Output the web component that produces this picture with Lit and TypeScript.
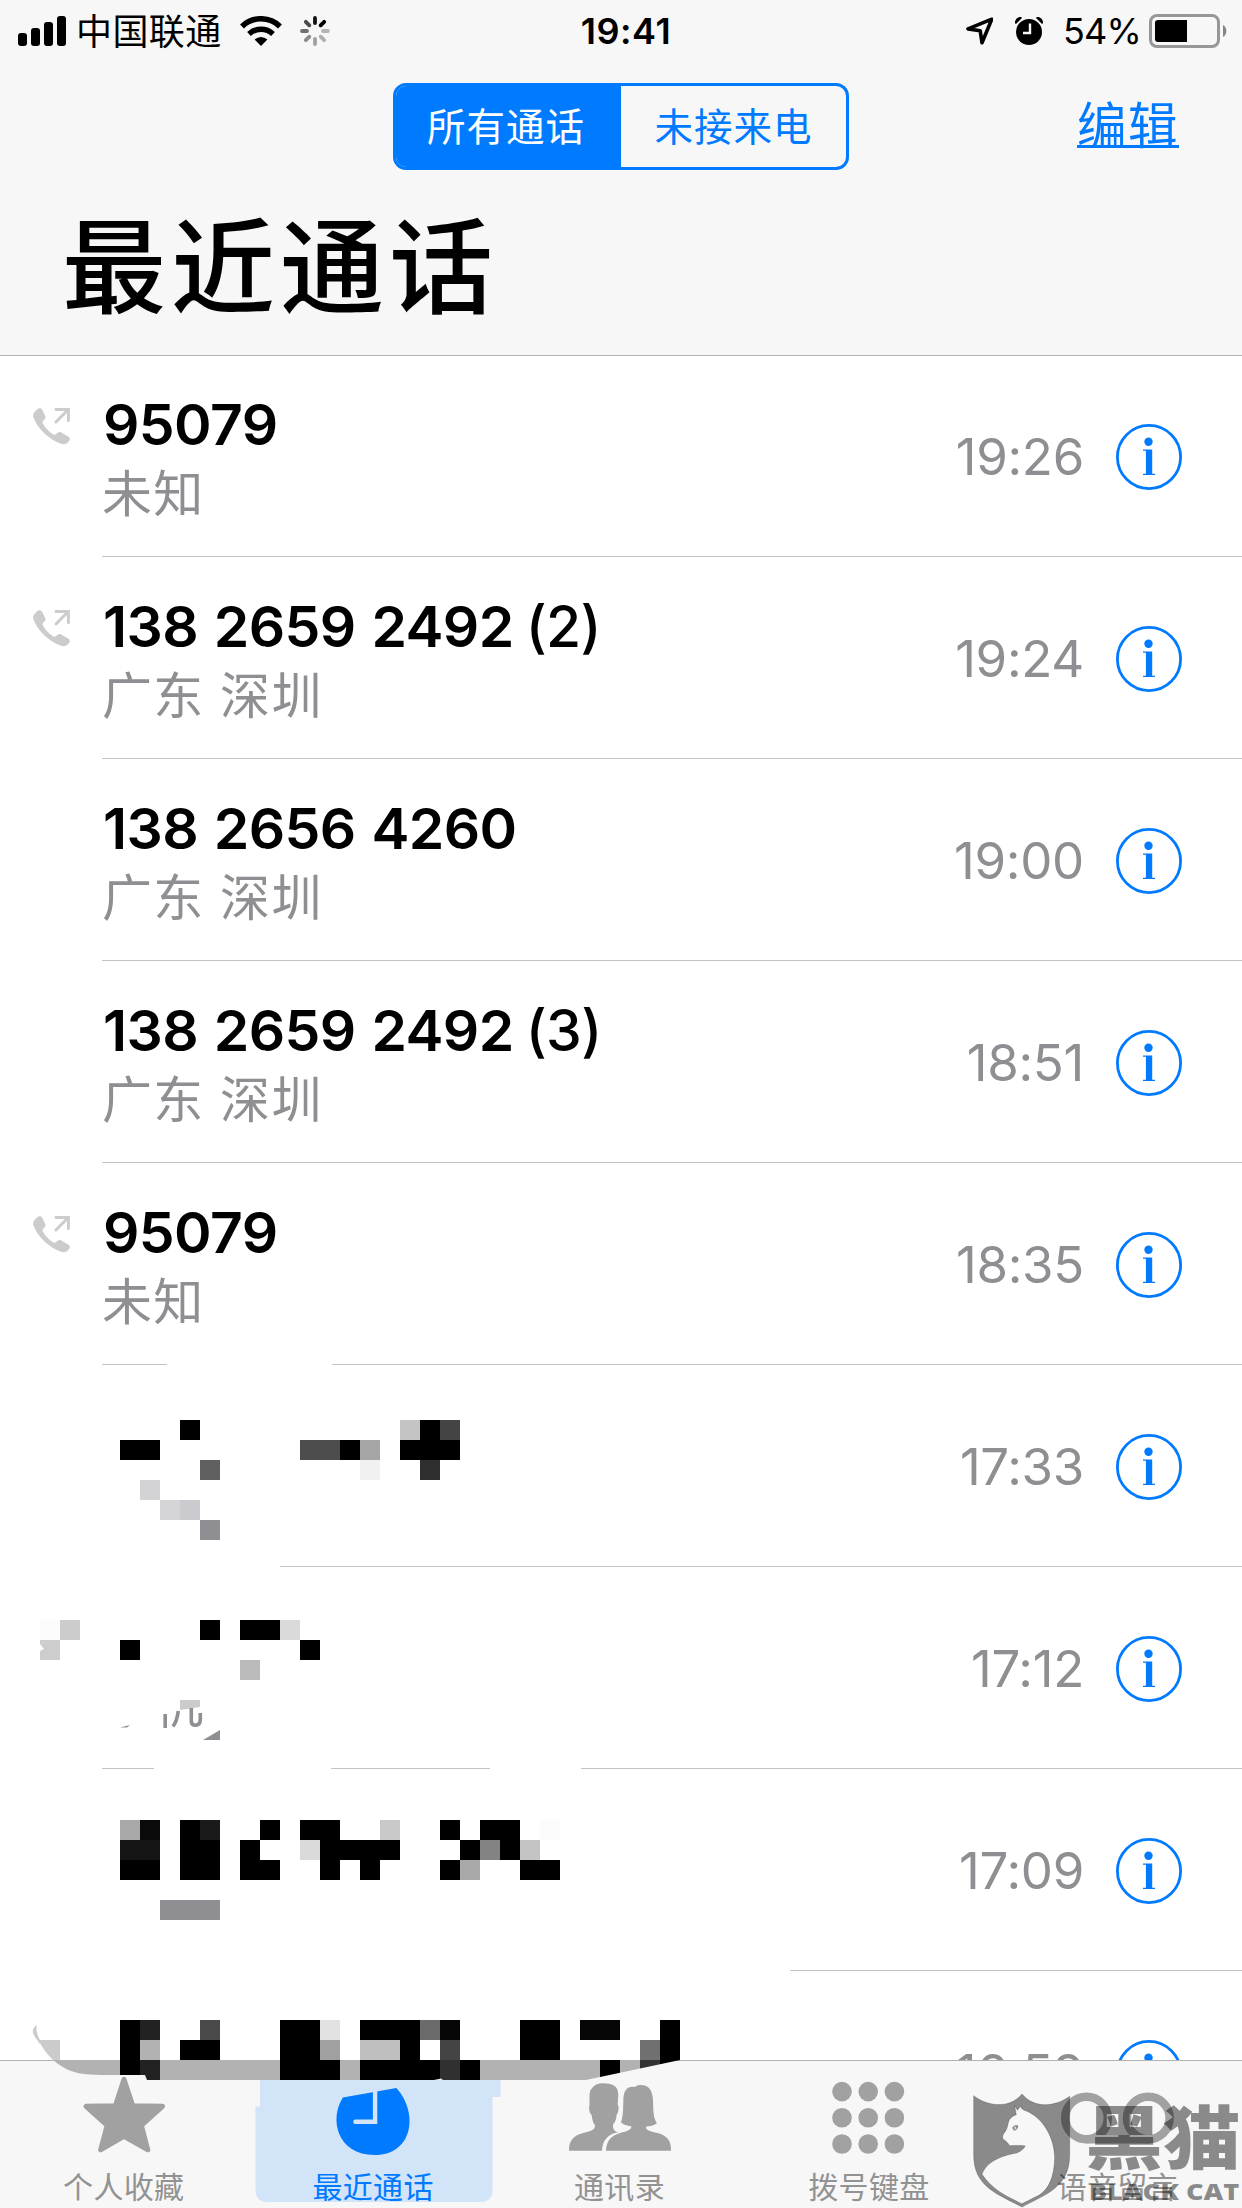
import { LitElement, html, svg, css, nothing } from "lit";
import { customElement, property } from "lit/decorators.js";

type Call = {
  name?: string;
  count?: string;
  place?: string;
  time: string;
  outgoing?: boolean;
  lines: [number, number][];
};

const FULL: [number, number][] = [[102, 1242]];

const CALLS: Call[] = [
  { name: "95079", place: "未知", time: "19:26", outgoing: true, lines: FULL },
  { name: "138 2659 2492", count: "(2)", place: "广东 深圳", time: "19:24", outgoing: true, lines: FULL },
  { name: "138 2656 4260", place: "广东 深圳", time: "19:00", lines: FULL },
  { name: "138 2659 2492", count: "(3)", place: "广东 深圳", time: "18:51", lines: FULL },
  { name: "95079", place: "未知", time: "18:35", outgoing: true, lines: [[102, 167], [332, 1242]] },
  { time: "17:33", lines: [[280, 1242]] },
  { time: "17:12", lines: [[102, 154], [331, 490], [581, 1242]] },
  { time: "17:09", lines: [[790, 1242]] },
  { time: "16:59", lines: [] },
];

// Censor blocks: x, y, width, fill (every block is 20px tall).
const BLOCKS: [number, number, number, string][] = [
  [180, 1420, 20, "#000"], [120, 1440, 40, "#000"], [200, 1460, 20, "#5f5f5f"],
  [140, 1480, 20, "#d3d3d5"], [160, 1500, 20, "#d5d5d7"], [180, 1500, 20, "#cbcbcf"],
  [200, 1520, 20, "#8e8e93"], [300, 1440, 40, "#4d4d4d"], [340, 1440, 20, "#000"],
  [360, 1440, 20, "#a5a5a5"], [360, 1460, 20, "#f1f1f1"], [400, 1420, 20, "#c4c4c4"],
  [420, 1420, 20, "#000"], [440, 1420, 20, "#444"], [400, 1440, 60, "#000"],
  [420, 1460, 20, "#2f2f2f"],

  [40, 1620, 20, "#fcfcfc"], [60, 1620, 20, "#ccc"], [120, 1640, 20, "#000"],
  [200, 1620, 20, "#000"], [240, 1620, 40, "#000"], [280, 1620, 20, "#dadada"],
  [300, 1640, 20, "#000"], [240, 1660, 20, "#bbb"],

  [120, 1820, 20, "#a9a9a9"], [140, 1820, 20, "#0a0a0a"], [180, 1820, 20, "#000"],
  [200, 1820, 20, "#1a1a1a"], [260, 1820, 20, "#000"], [300, 1820, 40, "#000"],
  [380, 1820, 20, "#c8c8c8"], [440, 1820, 20, "#000"], [480, 1820, 40, "#000"],
  [540, 1820, 20, "#fcfcfc"],
  [120, 1840, 40, "#141414"], [180, 1840, 40, "#000"], [240, 1840, 20, "#000"],
  [300, 1840, 20, "#dadada"], [320, 1840, 80, "#000"], [460, 1840, 20, "#000"],
  [480, 1840, 20, "#838383"], [500, 1840, 20, "#000"], [520, 1840, 20, "#c4c4c4"],
  [120, 1860, 40, "#000"], [180, 1860, 40, "#000"], [240, 1860, 40, "#000"],
  [320, 1860, 20, "#000"], [360, 1860, 20, "#000"], [440, 1860, 20, "#000"],
  [460, 1860, 20, "#a9a9a9"], [520, 1860, 40, "#000"],
  [160, 1900, 60, "#8e8e93"],

  [120, 2020, 20, "#000"], [140, 2020, 20, "#222"], [200, 2020, 20, "#4a4a4a"],
  [280, 2020, 40, "#000"], [320, 2020, 20, "#e2e2e2"], [360, 2020, 60, "#000"],
  [420, 2020, 20, "#6b6b6b"], [440, 2020, 20, "#050505"], [520, 2020, 40, "#000"],
  [580, 2020, 40, "#050505"], [660, 2020, 20, "#000"],
  [120, 2040, 20, "#000"], [140, 2040, 20, "#b2b2b2"], [180, 2040, 40, "#000"],
  [280, 2040, 40, "#000"], [320, 2040, 20, "#a0a0a0"], [360, 2040, 40, "#bfbfbf"],
  [400, 2040, 20, "#000"], [420, 2040, 20, "#fff"], [440, 2040, 20, "#444"],
  [520, 2040, 40, "#000"], [640, 2040, 20, "#707070"], [660, 2040, 20, "#000"],
];

const STRIP: [number, number, string][] = [
  [40, 80, "#b2b2b2"], [120, 20, "#000"], [140, 20, "#222"], [160, 120, "#b2b2b2"],
  [280, 60, "#000"], [340, 20, "#b2b2b2"], [360, 80, "#000"], [440, 20, "#303030"],
  [460, 20, "#000"], [480, 120, "#b2b2b2"], [600, 20, "#000"], [620, 20, "#b2b2b2"],
  [640, 20, "#333"], [660, 20, "#000"],
];

@customElement("status-bar")
class StatusBar extends LitElement {
  static styles = css`
    :host { display: block; }
    .bar {
      display: grid; grid-template-columns: 1fr auto 1fr; align-items: center;
      height: 60px; padding: 0 15px 0 18px;
      font-family: Inter, "Noto Sans CJK SC", sans-serif; font-size: 36px; line-height: 60px; color: #000;
    }
    .left, .right { display: flex; align-items: center; }
    .right { justify-content: flex-end; }
    .carrier { font-family: "Noto Sans CJK SC", sans-serif; font-weight: 400; font-size: 36px; line-height: 56px; letter-spacing: 0.4px; margin: 0 0 4px 10px; }
    .time { font-weight: 600; font-size: 36px; letter-spacing: 0.5px; padding-top: 1px; margin-left: 7px; }
    .pct { font-size: 36px; padding-top: 1px; letter-spacing: -0.8px; margin: 0 8px 0 20px; }
    svg { display: block; flex: none; }
    .wifi { margin-left: 18px; }
    .spin { margin-left: 18px; }
    .alarm { margin-left: 21px; }
    .loc { margin-right: 1px; }
  `;
  render() {
    const shades = ["#111", "#000", "#b5b5b5", "#b0b0b0", "#a0a0a0", "#8c8c8c", "#6f6f6f", "#4a4a4a"];
    return html`<div class="bar">
      <div class="left">
        <svg width="48" height="30" viewBox="0 0 48 30">
          <rect x="0" y="17" width="9" height="13" rx="3"/><rect x="13" y="12" width="9" height="18" rx="3"/>
          <rect x="26" y="6" width="9" height="24" rx="3"/><rect x="39" y="0" width="9" height="30" rx="3"/>
        </svg>
        <span class="carrier">中国联通</span>
        <svg class="wifi" width="42" height="30" viewBox="0 0 42 30">
          <path d="M2 10.6A27.5 27.5 0 0 1 40 10.6" fill="none" stroke="#000" stroke-width="5.6" transform="translate(0 -.2)"/>
          <path d="M9 18A17.5 17.5 0 0 1 33 18" fill="none" stroke="#000" stroke-width="5.4"/>
          <path d="M14.6 23.6A9.3 9.3 0 0 1 27.4 23.6L21 30Z"/>
        </svg>
        <svg class="spin" width="30" height="30" viewBox="-15 -15 30 30">
          ${shades.map((c, i) => svg`<path d="M0-8V-13" stroke=${c} stroke-width="3.8" stroke-linecap="round" transform="rotate(${i * 45})"/>`)}
        </svg>
      </div>
      <span class="time">19:41</span>
      <div class="right">
        <svg class="loc" width="28" height="28" viewBox="0 0 28 28">
          <path d="M25.8 2.2 2 11.9 14.2 13.8 16 25.8Z" fill="none" stroke="#000" stroke-width="3.6" stroke-linejoin="round" transform="translate(1 0)"/>
        </svg>
        <svg class="alarm" width="28" height="28" viewBox="0 0 28 28">
          <circle cx="14" cy="15" r="13"/><path d="M0 6.6A6 6 0 0 1 6-.2L7 1 1.2 6.8ZM28 6.6A6 6 0 0 0 22-.2L21 1 26.8 6.8Z"/>
          <path d="M15 6.5V16H8" fill="none" stroke="#f7f7f7" stroke-width="2.4"/>
        </svg>
        <span class="pct">54%</span>
        <svg width="78" height="34" viewBox="0 0 78 34">
          <rect x="1.5" y="1.5" width="68" height="31" rx="6.5" fill="none" stroke="#979797" stroke-width="3"/>
          <path d="M38 6H9Q6 6 6 9V25Q6 28 9 28H38Z"/>
          <path d="M74 11A7 7 0 0 1 74 23Z" fill="#868686"/>
        </svg>
      </div>
    </div>`;
  }
}

@customElement("call-row")
class CallRow extends LitElement {
  @property({ attribute: false }) call!: Call;
  static styles = css`
    :host { display: block; }
    .row { display: grid; grid-template-columns: 103px 1fr auto 66px; height: 201px; padding-right: 60px; }
    .icon { padding: 53px 0 0 33px; }
    .icon svg { display: block; }
    .text { padding-top: 36px; display: flex; flex-direction: column; }
    .name { font: 600 57px/68px Inter, sans-serif; letter-spacing: -0.6px; word-spacing: 2px; color: #000; white-space: pre; }
    .count { font-weight: 500; margin-left: 12px; }
    .place { font: 400 50px/68px "Noto Sans CJK SC", sans-serif; letter-spacing: 1.3px; word-spacing: 3px; color: #8e8e93; margin: -3px 0 0 -1px; }
    .time { font: 400 51px/68px Inter, sans-serif; letter-spacing: -0.3px; color: #8e8e93; align-self: center; padding: 2px 32px 0 0; }
    .info { align-self: center; display: block; margin-top: 2px; }
    .line { display: block; height: 1px; width: 1242px; }
  `;
  render() {
    const c = this.call;
    return html`<div class="row">
        <div class="icon">
          ${c.outgoing
            ? html`<svg width="38" height="37" viewBox="0 0 38 37" fill="#ccc">
                <path d="M4 1.4C5.500-.1 8-.1 9 1.6L12.2 7.8C12.8 9 12.6 10.4 11.6 11.3L10.4 12.4C9.4 13.4 9.4 14.6 10 15.8 12.6 20.3 16.2 23.8 20 26.2 21.2 26.9 22.3 26.8 23.2 25.9L24.4 24.9C25.5 24 26.9 23.8 28.2 24.6L35.2 28.6C37 29.6 37.2 31.4 36.3 32.8 34.4 35.6 31.5 37 28 35.8 15.4 31.2 4.4 20.6 .3 9 -.7 6 1.4 3.6 4 1.4Z"/>
                <path d="M23 1.4H35.4V12.6M35 1.8 23 14" fill="none" stroke="#ccc" stroke-width="3" stroke-linecap="round" stroke-linejoin="miter"/>
              </svg>`
            : nothing}
        </div>
        <div class="text">
          <span class="name">${c.name}${c.count ? html`<span class="count">${c.count}</span>` : nothing}</span>
          <span class="place">${c.place}</span>
        </div>
        <span class="time">${c.time}</span>
        <svg class="info" width="66" height="66" viewBox="0 0 66 66">
          <circle cx="33" cy="33" r="31.6" fill="none" stroke="#007aff" stroke-width="2.8"/>
          <circle cx="32.5" cy="17.7" r="4.2" fill="#007aff"/>
          <path d="M27 25.4H36.2V49.8H39V51H27V49.8H29.9V26.8H27Z" fill="#007aff"/>
        </svg>
      </div>
      <svg class="line" viewBox="0 0 1242 1">
        ${c.lines.map(([a, b]) => svg`<rect x=${a} y="0" width=${b - a} height="1" fill="#c4c4c6"/>`)}
      </svg>`;
  }
}

@customElement("tab-bar")
class TabBar extends LitElement {
  static styles = css`
    :host { display: block; }
    .bar { box-sizing: border-box; height: 148px; border-top: 1px solid #b2b2b2; background: #f7f7f7; display: flex; }
    .tab { flex: 1; display: flex; flex-direction: column; align-items: center; color: #929292; }
    .tab svg { display: block; height: 102px; width: 248px; overflow: visible; }
    .label { font: 400 30px/44px "Noto Sans CJK SC", sans-serif; letter-spacing: 0.3px; white-space: nowrap; margin-left: -1px; }
    .on { color: #007aff; }
    .on .label { margin-left: 1px; }
    .label.far { margin-left: -3px; }
  `;
  render() {
    // Each icon is drawn on a 248x102 field that starts just under the bar's hairline.
    const person = svg`<g transform="translate(72 22) scale(.3333) translate(-87 -310)" fill="#a1a1a1">
      <path d="M87 513C86 484 101 466 130 460 153 455 166 450 165 437 158 428 156 416 155 406 147 402 146 379 149 376 148 355 147 331 156 326 165 309 190 309 206 312 226 315 234 325 235 345L233 375C238 378 236 399 230 405 229 418 226 426 219 435 219 448 221 453 235 458 205 463 187 482 186 513Z"/>
      <path d="M198 513C199 484 213 468 240 460 262 455 275 451 274 440 261 439 251 436 243 428 250 408 249 390 250 365 250 334 260 318 284 322 295 312 318 315 327 325 341 341 339 365 340 390 341 409 344 419 351 431 341 438 330 440 318 441 317 451 330 455 353 460 382 467 394 485 393 513Z"/>
    </g>`;
    const icons = [
      svg`<path d="M123.8 18.5 132.6 45 162.3 45.5 141.2 64.5 147.6 89 123.8 75.5 100.4 89 107 64.5 85.8 45.5 115.2 45Z" transform="translate(.2 -.2)" fill="#a1a1a1" stroke="#a1a1a1" stroke-width="5" stroke-linejoin="round"/>`,
      svg`<path d="M11 18.500H251.500V36H243.500V129Q243.500 141 231 141H18.500Q6.500 141 6.500 129V45.500H11Z" fill="#d2e4f8"/>
          <g transform="translate(.9 0)"><path d="M93 36.500 146.500 27C169 52 163 94 124.700 94 87 94 79 58 93 36.500Z" fill="#007aff"/>
          <path d="M125.200 29.500V60.800H105.500" fill="none" stroke="#d2e4f8" stroke-width="4.400" stroke-linecap="round"/></g>`,
      person,
      svg`<g fill="#a1a1a1">${[0, 1, 2].map((r) => [0, 1, 2].map((c) => svg`<circle cx=${97 + c * 26.2} cy=${30.6 + r * 26.2} r="9.8"/>`))}</g>`,
      svg`<g fill="none" stroke="#a1a1a1" stroke-width="8.5"><circle cx="92.500" cy="57" r="21.300"/><circle cx="154.300" cy="57" r="21.300"/><path d="M92 78.300H154"/></g>`,
    ];
    const labels = ["个人收藏", "最近通话", "通讯录", "拨号键盘", "语音留言"];
    return html`<div class="bar">
      ${labels.map((l, i) => html`<div class="tab ${i === 1 ? "on" : ""}">
        <svg viewBox="0 0 248 102">${icons[i]}</svg><span class="label ${i === 2 ? "far" : ""}">${l}</span></div>`)}
    </div>`;
  }
}

@customElement("app-root")
class AppRoot extends LitElement {
  static styles = css`
    :host { display: block; }
    .page { position: relative; display: flex; flex-direction: column; width: 1242px; height: 2208px; overflow: hidden; background: #fff; }
    .head { box-sizing: border-box; height: 356px; border-bottom: 1px solid #b2b2b2; background: #f7f7f7; margin-bottom: -1px; flex: none; }
    .nav { display: grid; grid-template-columns: 1fr 456px 1fr; margin-top: 23px; height: 87px; }
    .seg { grid-column: 2; box-sizing: border-box; border: 3px solid #007aff; border-radius: 13px; display: grid; grid-template-columns: 225px 1fr; overflow: hidden;
      font: 400 38.500px/76px "Noto Sans CJK SC", sans-serif; letter-spacing: 1px; text-align: center; color: #007aff; }
    .seg .on { background: #007aff; color: #fff; padding-right: 5px; }
    .edit { justify-self: end; margin-right: 63px; font: 400 49.500px/80px "Noto Sans CJK SC", sans-serif; letter-spacing: 1.500px; color: #007aff; border-bottom: 3px solid #007aff; box-sizing: border-box; height: 65px; }
    .title { margin: 0; padding: 16px 0 0 62px; font: 500 104px/150px "Noto Sans CJK SC", sans-serif; letter-spacing: 5px; color: #000; }
    .list { flex: 1; min-height: 0; overflow: hidden; }
    .over { position: absolute; left: 0; top: 0; pointer-events: none; }
    .mark { position: absolute; left: 900px; top: 1980px; pointer-events: none; }
    .cn { font: 900 208px "Noto Sans CJK SC", sans-serif; }
    .en { font: 800 66px "Open Sans", sans-serif; }
  `;
  render() {
    return html`<div class="page">
      <header class="head">
        <status-bar></status-bar>
        <div class="nav">
          <div class="seg"><span class="on">所有通话</span><span>未接来电</span></div>
          <span class="edit">编辑</span>
        </div>
        <h1 class="title">最近通话</h1>
      </header>
      <main class="list">${CALLS.map((c) => html`<call-row .call=${c}></call-row>`)}</main>
      <tab-bar></tab-bar>
      <svg class="over" width="700" height="2208" viewBox="0 0 700 2208">
        <g shape-rendering="crispEdges">
          ${BLOCKS.map(([x, y, w, f]) => svg`<rect x=${x} y=${y} width=${w} height="20" fill=${f}/>`)}
        </g>
        <path d="M40 1640H60V1660H40V1651L44 1649 40 1644Z" fill="#cdcdcd"/>
        <path d="M180 1700H200V1707L180 1710Z" fill="#cbcbcd"/>
        <g fill="none" stroke="#8e8e93" stroke-width="3.600">
          <path d="M165.200 1714V1728M178.300 1711Q177 1721 173 1726.500M191.300 1708V1721Q191.300 1725.200 195.500 1725.200 200.300 1725.200 200.300 1719V1713"/>
        </g>
        <path d="M203 1740 220 1730V1740ZM120 1727.500 130 1725 127 1727.500Z" fill="#8e8e93"/>
        <path d="M36.500 2025Q30 2030 35 2037L40 2044V2040Q36 2034 36.500 2025ZM40 2040H60V2060H53Q44 2051 40 2043Z" fill="#cbcbcb"/>
        <clipPath id="strip"><path d="M53 2060H680L586 2080H443L441 2078.500 434 2080H147L145 2075H120C80 2075 72 2075 53 2060Z"/></clipPath>
        <g clip-path="url(#strip)">
          ${STRIP.map(([x, w, f]) => svg`<rect x=${x} y="2060" width=${w} height="20" fill=${f}/>`)}
        </g>
      </svg>
      <svg class="mark" width="342" height="228" viewBox="0 0 1026 684" fill="#000" fill-opacity=".44">
        <path fill-rule="evenodd" stroke="#000" stroke-opacity=".2" stroke-width="3" d="M221 347C265 381 330 386 366 342 402 386 466 381 509 349V525C509 620 440 642 366 681 292 642 221 620 221 525ZM344 377C348 383 351 387 352 391L362 379C363 387 370 391 379 393 430 414 464 475 464 535 462 590 448 625 418 645L366 671C320 650 278 630 246 583 259 545 304 527 350 519 362 514 370 508 376 498 358 495 346 497 329 497 324 489 317 482 310 478 306 472 308 466 312 460 325 445 322 430 329 418 335 410 341 407 349 404Z"/>
        <path d="M336 444Q344 431 355 437 355 449 341 453 342 448 336 444ZM344 438V449L349 444Z" fill-rule="evenodd"/>
        <text class="cn" x="556" y="552" textLength="466" lengthAdjust="spacingAndGlyphs">黑猫</text>
        <text class="en" x="566" y="660" textLength="452" lengthAdjust="spacingAndGlyphs">BLACK CAT</text>
      </svg>
    </div>`;
  }
}
